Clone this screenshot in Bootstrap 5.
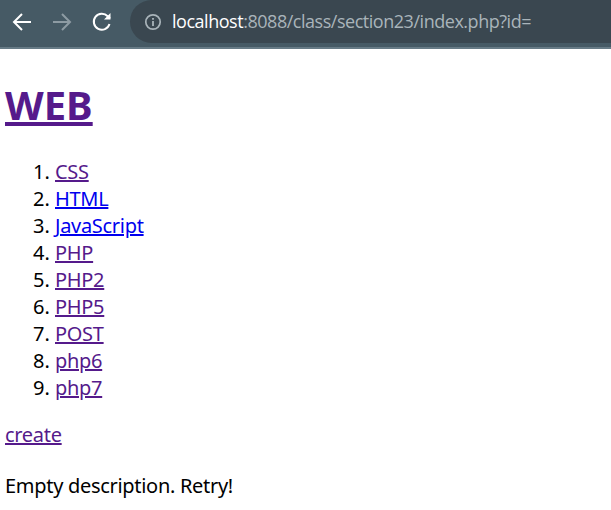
<!DOCTYPE html>
<html lang="en">

<head>
    <meta charset="UTF-8" />
    <meta name="viewport" content="width=device-width, initial-scale=1.0" />
    <title>WEB</title>
    <link href="https://cdn.jsdelivr.net/npm/bootstrap@5.3.6/dist/css/bootstrap.min.css" rel="stylesheet">
    <style>
        body {
            background-color: white;
            color: black;
            font-family: "Noto Sans", "Noto Sans CJK KR", sans-serif;
            font-size: 20px;
            overflow: hidden;
        }

        .chrome-bar {
            height: 49px;
            background-color: #465a65;
            border-bottom: 2px solid #677b86;
            padding-left: 10px;
        }

        .nav-btn {
            width: 24px;
            height: 24px;
            margin-right: 16px;
            flex: none;
        }

        .nav-group {
            height: 43px;
        }

        .url-box {
            height: 43px;
            background-color: #3a4750;
            border-radius: 22px 0 0 22px;
            padding-left: 14px;
            font-family: "Open Sans", sans-serif;
            font-size: 18px;
            letter-spacing: -0.47px;
            color: #a9b4ba;
        }

        .info-icon {
            margin-right: 10px;
        }

        .url-host {
            color: #fff;
        }

        .page-body {
            padding: 0 5px;
        }

        .page-title {
            font-size: 40px;
            font-weight: 700;
            line-height: 54px;
            margin: 29px 0 26px;
        }

        .topic-list {
            padding-left: 50px;
            margin-bottom: 20px;
            line-height: 27px;
        }

        .topic-list a,
        .page-line {
            letter-spacing: -0.3px;
        }

        .page-body a {
            color: #551a8b;
        }

        .page-body a.fresh {
            color: #0000ee;
        }

        .page-line {
            line-height: 27px;
            margin-bottom: 24px;
        }
    </style>
</head>

<body>
    <div class="chrome-bar d-flex align-items-start">
        <div class="nav-group d-flex align-items-center">
            <svg class="nav-btn" viewBox="0 0 24 24" fill="none" stroke="#fff" stroke-width="2">
                <path d="M21 12H4M12 4l-8 8 8 8" />
            </svg>
            <svg class="nav-btn" viewBox="0 0 24 24" fill="none" stroke="#8d9ba3" stroke-width="2">
                <path d="M3 12h17M12 4l8 8-8 8" />
            </svg>
            <svg class="nav-btn" viewBox="0 0 24 24" fill="none" stroke="#fff" stroke-width="2">
                <path d="M19.5 14a8 8 0 1 1-1.8-7.7L20 8.5" />
                <path d="M20.5 3v6.5H14" fill="#fff" stroke="none" />
            </svg>
        </div>
        <div class="url-box flex-grow-1 d-flex align-items-center">
            <svg width="18" height="18" viewBox="0 0 18 18" class="info-icon flex-shrink-0" fill="none">
                <circle cx="9" cy="9" r="7.2" stroke="#a9b4ba" stroke-width="1.7" />
                <path d="M9 8v5M9 5v1.8" stroke="#a9b4ba" stroke-width="1.8" />
            </svg>
            <span class="text-nowrap"><span class="url-host">localhost</span>:8088/class/section23/index.php?id=</span>
        </div>
    </div>

    <div class="page-body">
        <h1 class="page-title"><a href="#">WEB</a></h1>
        <ol class="topic-list">
            <li><a href="#">CSS</a></li>
            <li><a class="fresh" href="#">HTML</a></li>
            <li><a class="fresh" href="#">JavaScript</a></li>
            <li><a href="#">PHP</a></li>
            <li><a href="#">PHP2</a></li>
            <li><a href="#">PHP5</a></li>
            <li><a href="#">POST</a></li>
            <li><a href="#">php6</a></li>
            <li><a href="#">php7</a></li>
        </ol>
        <div class="page-line"><a href="#">create</a></div>
        <div class="page-line">Empty description. Retry!</div>
    </div>

    <script src="https://cdn.jsdelivr.net/npm/bootstrap@5.3.6/dist/js/bootstrap.bundle.min.js"></script>
</body>

</html>
